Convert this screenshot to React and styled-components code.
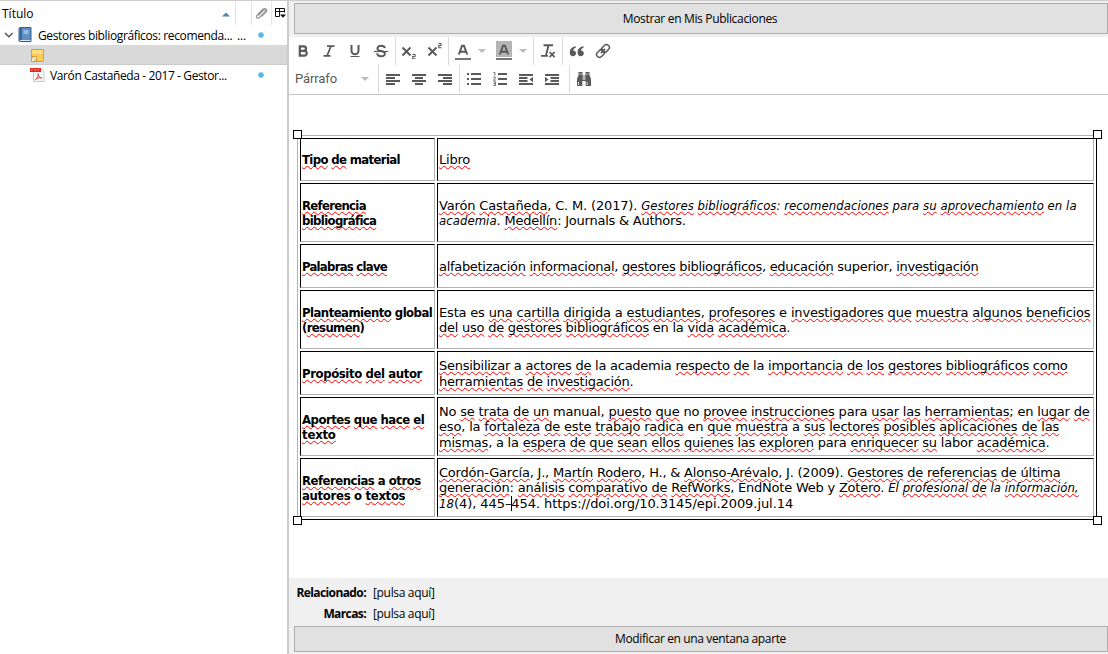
import React from 'react';
import styled, { createGlobalStyle, css } from 'styled-components';

const ink = '#595959';

const GlobalStyle = createGlobalStyle`
  *, *::before, *::after { box-sizing: border-box; }
  body { margin: 0; background: #fff; overflow: hidden; }
`;

const Window = styled.div`
  display: flex;
  width: 1108px;
  height: 654px;
  overflow: hidden;
  border-top: 1px solid #cdcdcd;
  background: #fff;
  color: #000;
  font: 12px/16px 'Open Sans', 'Noto Sans', sans-serif;
`;

const ItemsPane = styled.aside`
  width: 287px;
  flex: none;
`;

const TreeHeader = styled.div`
  display: flex;
  height: 24px;
`;

const HeaderCell = styled.div`
  display: flex;
  align-items: center;
  justify-content: ${(p) => (p.$spread ? 'space-between' : 'center')};
  width: ${(p) => p.$width}px;
  padding: ${(p) => (p.$spread ? '2px 5px 0 2px' : '0')};
  border-right: ${(p) => (p.$last ? 'none' : '1px solid #e5e5e5')};
`;

const TreeRow = styled.div`
  display: flex;
  align-items: center;
  height: 20px;
  padding-left: ${(p) => p.$indent}px;
  background: ${(p) => (p.$selected ? '#d9d9d9' : 'transparent')};
  border-bottom: 1px solid ${(p) => (p.$selected ? '#cbcbcb' : 'transparent')};
`;

const RowTitle = styled.span`
  width: ${(p) => p.$width}px;
  margin-left: ${(p) => p.$gap}px;
  padding-top: 2px;
  white-space: nowrap;
  letter-spacing: ${(p) => p.$track}px;
`;

const RowIcon = styled.span`
  display: flex;
  margin: 1px 0 0 ${(p) => p.$gap || 0}px;
`;

const Dot = styled.span`
  width: 6px;
  height: 6px;
  margin-left: ${(p) => p.$gap}px;
  border-radius: 50%;
  background: #45b8f0;
  border: 1px solid #8cc4e2;
`;

const Splitter = styled.div`
  width: 2px;
  flex: none;
  background: #cbcbcb;
`;

const NotePane = styled.main`
  display: flex;
  flex-direction: column;
  flex: 1;
  min-width: 0;
  background: #f0f0f0;
`;

const WideButton = styled.button`
  display: block;
  height: ${(p) => p.$height}px;
  margin: ${(p) => p.$margin};
  padding: ${(p) => p.$padding};
  border: 1px solid #adadad;
  background: #e1e1e1;
  color: #000;
  font: inherit;
  letter-spacing: ${(p) => p.$track}px;
`;

const Toolbar = styled.div`
  height: 58px;
  flex: none;
  background: #fff;
  border-bottom: 1px solid #c5c5c5;
`;

const ToolRow = styled.div`
  display: flex;
  height: 28px;
`;

const ToolGroup = styled.div`
  display: flex;
  align-items: center;
  width: ${(p) => p.$width}px;
  height: 28px;
  padding-left: ${(p) => p.$pad || 0}px;
  border-right: ${(p) => (p.$last ? 'none' : '1px solid #d9d9d9')};
`;

const Tool = styled.span`
  display: flex;
  align-items: center;
  justify-content: center;
  width: ${(p) => p.$width || 26}px;
  height: 28px;
  flex: none;
`;

const FormatLabel = styled.span`
  width: 66px;
  color: #595959;
  font: 13px/16px Roboto, 'Liberation Sans', sans-serif;
  letter-spacing: -0.1px;
`;

const Caret = styled.i`
  width: 0;
  height: 0;
  border: 4px solid transparent;
  border-top-color: #b5bcc2;
  border-bottom: none;
`;

const Editor = styled.div`
  height: 483px;
  flex: none;
  padding: 40px 0 0 8px;
  background: #fff;
`;

const NoteTable = styled.div`
  position: relative;
  display: grid;
  grid-template-columns: 135px 657px;
  grid-template-rows: 43px 59px 44px 59px 44px 59px 59px;
  gap: 2px;
  width: 800px;
  height: 385px;
  padding: 2px;
  border: 1px solid;
  border-color: #b2b2b2 #000 #000 #b2b2b2;
  font: 13px/15.4px 'DejaVu Sans', sans-serif;
`;

const condensed = css`
  font-family: 'DejaVu Sans Condensed', 'DejaVu Sans', sans-serif;
  font-stretch: condensed;
`;

const Cell = styled.div`
  display: flex;
  flex-direction: column;
  justify-content: center;
  padding: 1px 0 0 1px;
  border: 1px solid;
  border-color: #000 #b2b2b2 #b2b2b2 #000;
  ${(p) =>
    p.$label &&
    css`
      ${condensed}
      font-weight: bold;
    `}
`;

const Line = styled.div`
  white-space: pre;
  letter-spacing: ${(p) => p.$track || 0}px;
`;

const Word = styled.span`
  ${(p) =>
    p.$italic &&
    css`
      ${condensed}
      font-style: italic;
      letter-spacing: 0.05px;
    `}
  ${(p) =>
    p.$flagged &&
    css`
      text-decoration: underline wavy #f00 0.8px;
      text-decoration-skip-ink: none;
      text-underline-offset: 1px;
    `}
`;

const TextCursor = styled.span`
  display: inline-block;
  width: 1px;
  height: 15px;
  margin-right: -1px;
  vertical-align: -3px;
  background: #000;
`;

const Handle = styled.i`
  position: absolute;
  width: 9px;
  height: 9px;
  border: 1px solid #000;
  background: #fff;
  ${(p) => (p.$bottom ? 'bottom: -6px;' : 'top: -6px;')}
  ${(p) => (p.$right ? 'right: -6px;' : 'left: -5px;')}
`;

const Links = styled.dl`
  display: grid;
  grid-template-columns: 77px 1fr;
  grid-auto-rows: 21px;
  column-gap: 7px;
  margin: 0;
  padding-top: 4px;
  line-height: 21px;
`;

const LinkLabel = styled.dt`
  text-align: right;
  font-weight: bold;
  letter-spacing: -0.6px;
`;

const LinkValue = styled.dd`
  margin: 0;
  letter-spacing: -0.33px;
`;

/* "_" toggles the spelling mark, "*" toggles italics, "|" is the text cursor. */
function RichLine({ text, track }) {
  let italic = false;
  let flagged = false;
  const out = [];
  text.split(/([_*|])/).forEach((part, i) => {
    if (part === '_') flagged = !flagged;
    else if (part === '*') italic = !italic;
    else if (part === '|') out.push(<TextCursor key={i} />);
    else if (part) out.push(<Word key={i} $italic={italic} $flagged={flagged}>{part}</Word>);
  });
  return <Line $track={track}>{out}</Line>;
}

const rows = [
  { label: [['_Tipo_ _de_ material', -0.64]], body: [['_Libro_', -0.2]] },
  {
    label: [['_Referencia_', -0.7], ['_bibliográfica_', -0.65]],
    body: [
      ['_Varón_ _Castañeda_, C. M. (2017). *_Gestores_ _bibliográficos_: _recomendaciones_ para _su_ _aprovechamiento_ en la*', -0.16],
      ['*academia*. _Medellín_: Journals & Authors.', -0.23],
    ],
  },
  {
    label: [['_Palabras_ _clave_', -0.75]],
    body: [['_alfabetización_ _informacional_, _gestores_ _bibliográficos_, _educación_ superior, _investigación_', -0.3]],
  },
  {
    label: [['_Planteamiento_ global', -0.54], ['(_resumen_)', -0.65]],
    body: [
      ['Esta es _una_ _cartilla_ _dirigida_ a _estudiantes_, _profesores_ e _investigadores_ _que_ _muestra_ _algunos_ _beneficios_', -0.18],
      ['_del_ _uso_ _de_ _gestores_ _bibliográficos_ en la _vida_ _académica_.', -0.25],
    ],
  },
  {
    label: [['_Propósito_ _del_ _autor_', -0.4]],
    body: [
      ['_Sensibilizar_ a _actores_ _de_ la academia _respecto_ _de_ la _importancia_ _de_ _los_ _gestores_ _bibliográficos_ _como_', -0.26],
      ['_herramientas_ _de_ _investigación_.', -0.25],
    ],
  },
  {
    label: [['_Aportes_ _que_ _hace_ _el_', -0.5], ['_texto_', -0.2]],
    body: [
      ['No _se_ _trata_ _de_ _un_ manual, _puesto_ _que_ no _provee_ _instrucciones_ para _usar_ _las_ _herramientas_; en _lugar_ _de_', -0.19],
      ['_eso_, la _fortaleza_ _de_ _este_ _trabajo_ _radica_ en _que_ _muestra_ a _sus_ _lectores_ _posibles_ _aplicaciones_ _de_ _las_', -0.17],
      ['_mismas_, a la _espera_ _de_ _que_ _sean_ _ellos_ _quienes_ _las_ _exploren_ para _enriquecer_ _su_ labor _académica_.', -0.22],
    ],
  },
  {
    label: [['_Referencias_ a _otros_', -0.5], ['_autores_ o _textos_', -0.32]],
    body: [
      ['_Cordón-García_, J., _Martín_ _Rodero_, H., & _Alonso-Arévalo_, J. (2009). _Gestores_ _de_ _referencias_ _de_ _última_', -0.22],
      ['_generación_: _análisis_ _comparativo_ _de_ _RefWorks_, EndNote Web y _Zotero_. *El _profesional_ _de_ la _información,_*', -0.22],
      ['*18*(4), 445–|454. https://doi.org/10.3145/epi.2009.jul.14', -0.07],
    ],
  },
];

const Svg = ({ w = 16, h = 16, children }) => (
  <svg width={w} height={h} viewBox={`0 0 ${w} ${h}`} fill="none">{children}</svg>
);

const Bars = ({ bars }) => (
  <Svg>
    {bars.map(([x, y, w], i) => (
      <rect key={i} x={x} y={y} width={w} height="2" fill={ink} />
    ))}
  </Svg>
);

const Bold = () => (
  <Svg><path d="M4.800 2.200v11.600M4.800 3.300h4a2.200 2.200 0 0 1 0 4.500h-4M4.800 7.800h4.500a2.400 2.400 0 0 1 0 4.900H4.800" stroke={ink} strokeWidth="2.200" /></Svg>
);
const Italic = () => (
  <Svg><path d="M6 3.200h7.500M2.500 12.800h7M10 3 6 13" stroke={ink} strokeWidth="1.800" /></Svg>
);
const Underline = () => (
  <Svg><path d="M4.500 2v5.800a3.500 3.500 0 0 0 7 0V2" stroke={ink} strokeWidth="2" /><path d="M3.500 13.500h9" stroke={ink} /></Svg>
);
const Strike = () => (
  <Svg><path d="M11.900 5.200C11.600 3.300 10.300 2.700 8.100 2.700 6 2.700 4.400 3.700 4.400 5.400c0 3.600 7.500 1.500 7.500 5.100 0 1.800-1.600 2.800-3.800 2.800-2.300 0-3.800-.9-4.100-2.900" stroke={ink} strokeWidth="1.900" /><path d="M1 8.500h14" stroke={ink} strokeWidth="1.200" /></Svg>
);
const Script = ({ up }) => (
  <Svg>
    <path d="m1.500 4.500 8 8m0-8-8 8" stroke={ink} strokeWidth="1.900" />
    <path transform={up ? 'translate(0 -10)' : 'translate(0 1)'} d="M11.300 10.500h2.700v2h-2.300v2.200h2.900" stroke={ink} strokeWidth="1.100" />
  </Svg>
);
const LetterColor = ({ filled }) => (
  <Svg w={18} h={20}>
    {filled && <rect x="1" width="16" height="16" fill="#b5b5b5" />}
    <path d="M4.800 13.500 8 4.800h2l3.200 8.700M6 10.800h6" stroke={ink} strokeWidth="1.900" />
    <path d="M1 18h16" stroke="#777" strokeWidth="2" />
  </Svg>
);
const ClearFormat = () => (
  <Svg><path d="M3.500 2.300h9.500M8.500 2.500 6.100 12M1 12.900h7" stroke={ink} strokeWidth="1.900" /><path d="m9.600 9 5 5.200m0-5.200-5 5.200" stroke={ink} strokeWidth="1.700" /></Svg>
);
const Quote = () => (
  <Svg>
    {[0, 7.8].map((x) => (
      <path key={x} transform={`translate(${x} 0)`} d="M6.700 3.300C3.200 4 .8 6 .8 9.400c0 2.500 1.200 3.800 3.200 3.800 1.800 0 3-1.200 3-2.900S5.700 7.400 4.200 7.400c.1-1.400 1-2.200 2.500-2.700z" fill={ink} />
    ))}
  </Svg>
);
const Chain = () => (
  <Svg>
    <g transform="rotate(-45 8 8)" stroke={ink} strokeWidth="1.5">
      <rect x=".2" y="5.1" width="8.6" height="5.8" rx="2.9" />
      <rect x="7.2" y="5.1" width="8.6" height="5.8" rx="2.9" />
      <path d="M5 8h6" />
    </g>
  </Svg>
);
const BulletList = () => (
  <Svg>
    {[3, 8, 13].map((y) => (
      <path key={y} d={`M1 ${y}h2M5 ${y}h10`} stroke={ink} strokeWidth="2" />
    ))}
  </Svg>
);
const NumberList = () => (
  <Svg>
    <path d="M6 3h9M6 8h9M6 13h9" stroke={ink} strokeWidth="2" />
    <path d="M1.500 1.500h1.400v3.200M1.300 6.200h2v1.100L1.500 9.200h2.200M1.300 10.900h2.100v3.600H1.300m.4-1.800h1.600" stroke={ink} strokeWidth=".9" />
  </Svg>
);
const Dent = ({ inward }) => (
  <Svg>
    <path d="M1 4h14M1 13h14" stroke={ink} strokeWidth="2" />
    <path d={inward ? 'M6.500 7H15M6.500 10H15' : 'M1 7h8.500M1 10h8.500'} stroke={ink} strokeWidth="2" />
    <path d={inward ? 'M1 5.800 4.500 8.500 1 11.200z' : 'M15 5.800 11.500 8.500l3.500 2.700z'} fill={ink} />
  </Svg>
);
const Binoculars = () => (
  <Svg>
    <path d="M2.500 1h4v3h3V1h4v3L15 8v7H9.700V10H6.300v5H1V8l1.500-4z" fill={ink} />
    <path d="M7.200 4v5M8.800 4v5M2.500 11v3M11.200 11v3" stroke="#fff" strokeWidth=".8" />
    <path d="M3 3h3M10 3h3" stroke="#fff" strokeWidth=".6" />
  </Svg>
);

const BookIcon = () => (
  <Svg w={14} h={16}>
    <path d="M1 1.500C1 1 1.500.5 2 .5h11v14H2c-.6 0-1-.4-1-1z" fill="#5d8fc5" stroke="#335f91" />
    <path d="M3 1v12" stroke="#315d91" strokeWidth="1.500" />
    <path d="M2 13.500h10.500" stroke="#dce7f2" />
    <path d="M5.500 4h5M5.500 6h5" stroke="#d6e5f3" />
  </Svg>
);
const NoteIcon = () => (
  <Svg w={13} h={13}>
    <path d="M.5.500h12v12H.5z" fill="#fbcd58" stroke="#dda13b" />
    <path d="M1.500 1.500h10v3h-10z" fill="#fde38d" />
    <path d="M.5 7.500h5v5h-5z" fill="#fff4c9" stroke="#d99834" />
    <path d="m1 8 4 4" stroke="#e6a63c" />
  </Svg>
);
const PdfIcon = () => (
  <Svg w={15} h={16}>
    <path d="M3.500 1.500h7l3.500 3v10H3.500z" fill="#f8f8f8" stroke="#c9c9c9" />
    <path d="M0 1h11v4H0z" fill="#e2261b" />
    <path d="M1.500 4V2h1v1h-1M5 2v2h1V2zM8 4V2h1.500M8 3h1" stroke="#ffb5ad" strokeWidth=".4" />
    <path d="M5.500 12.500c2-1 3.200-4.200 2.700-5.800C7 7.500 10 11.400 12 11c-1.700-1-4.500-.2-6.500 1.500z" stroke="#dc4b40" />
  </Svg>
);
const ClipIcon = () => (
  <Svg w={13} h={13}>
    <path d="m3.200 8.500 5-5c1.700-1.500 3 .1 1.800 1.400L5 10c-2.600 2.500-5 .1-2.800-2.100l5.200-5.200C10.300-.1 13.200 2.700 10.800 5.200L6.500 9.600" stroke="#939393" strokeWidth="1.100" />
  </Svg>
);
const ColumnsIcon = () => (
  <Svg w={12} h={12}>
    <path d="M1.500 1.500h9v4M1.500 1v8.500h4M1 4.500h10M5.500 1.500v8" stroke="#111" />
    <path d="M6 7.500h6l-3 3.200z" fill="#111" />
  </Svg>
);

export default function App() {
  return (
    <Window>
      <GlobalStyle />
      <ItemsPane>
        <TreeHeader>
          <HeaderCell $width={236} $spread>
            Título
            <Svg w={8} h={5}><path d="M0 4.500 4 .5l4 4z" fill="#4a86ad" /></Svg>
          </HeaderCell>
          <HeaderCell $width={16} />
          <HeaderCell $width={20}><ClipIcon /></HeaderCell>
          <HeaderCell $width={15} $last><ColumnsIcon /></HeaderCell>
        </TreeHeader>
        <TreeRow $indent={4}>
          <Svg w={10} h={8}><path d="m1 2 3.800 3.800L8.600 2" stroke="#555" strokeWidth="1.500" /></Svg>
          <RowIcon $gap={4}><BookIcon /></RowIcon>
          <RowTitle $width={195} $gap={6} $track={-0.36}>Gestores bibliográficos: recomenda...</RowTitle>
          <RowTitle $width={12} $gap={4} $track={-0.2}>...</RowTitle>
          <Dot $gap={9} />
        </TreeRow>
        <TreeRow $indent={31} $selected><RowIcon><NoteIcon /></RowIcon></TreeRow>
        <TreeRow $indent={30}>
          <PdfIcon />
          <RowTitle $width={208} $gap={5} $track={-0.39}>Varón Castañeda - 2017 - Gestor...</RowTitle>
          <Dot $gap={0} />
        </TreeRow>
      </ItemsPane>
      <Splitter />
      <NotePane>
        <WideButton $height={31} $margin="2px 0 3px 5px" $padding="1px 2px 0 0" $track={-0.33}>Mostrar en Mis Publicaciones</WideButton>
        <Toolbar>
          <ToolRow>
            <ToolGroup $width={107} $pad={1}>
              <Tool><Bold /></Tool>
              <Tool><Italic /></Tool>
              <Tool><Underline /></Tool>
              <Tool><Strike /></Tool>
            </ToolGroup>
            <ToolGroup $width={53}>
              <Tool><Script /></Tool>
              <Tool><Script up /></Tool>
            </ToolGroup>
            <ToolGroup $width={85}>
              <Tool $width={28}><LetterColor /></Tool>
              <Tool $width={10}><Caret /></Tool>
              <Tool $width={34}><LetterColor filled /></Tool>
              <Tool $width={4}><Caret /></Tool>
            </ToolGroup>
            <ToolGroup $width={29} $pad={1}><Tool><ClearFormat /></Tool></ToolGroup>
            <ToolGroup $width={60} $pad={1} $last>
              <Tool><Quote /></Tool>
              <Tool><Chain /></Tool>
            </ToolGroup>
          </ToolRow>
          <ToolRow>
            <ToolGroup $width={90} $pad={6}>
              <FormatLabel>Párrafo</FormatLabel>
              <Caret />
            </ToolGroup>
            <ToolGroup $width={81} $pad={1}>
              <Tool><Bars bars={[[1, 3, 14], [1, 6, 9], [1, 9, 14], [1, 12, 9]]} /></Tool>
              <Tool><Bars bars={[[1, 3, 14], [4, 6, 8], [1, 9, 14], [4, 12, 8]]} /></Tool>
              <Tool><Bars bars={[[1, 3, 14], [6, 6, 9], [1, 9, 14], [6, 12, 9]]} /></Tool>
            </ToolGroup>
            <ToolGroup $width={110} $pad={1}>
              <Tool><BulletList /></Tool>
              <Tool><NumberList /></Tool>
              <Tool><Dent /></Tool>
              <Tool><Dent inward /></Tool>
            </ToolGroup>
            <ToolGroup $width={40} $pad={1} $last><Tool><Binoculars /></Tool></ToolGroup>
          </ToolRow>
        </Toolbar>
        <Editor>
          <NoteTable>
            {rows.map((row, i) => (
              <React.Fragment key={i}>
                <Cell $label>
                  {row.label.map(([text, track]) => <RichLine key={text} text={text} track={track} />)}
                </Cell>
                <Cell>
                  {row.body.map(([text, track]) => <RichLine key={text} text={text} track={track} />)}
                </Cell>
              </React.Fragment>
            ))}
            <Handle />
            <Handle $right />
            <Handle $bottom />
            <Handle $bottom $right />
          </NoteTable>
        </Editor>
        <Links>
          <LinkLabel>Relacionado:</LinkLabel>
          <LinkValue>[pulsa aquí]</LinkValue>
          <LinkLabel>Marcas:</LinkLabel>
          <LinkValue>[pulsa aquí]</LinkValue>
        </Links>
        <WideButton $height={26} $margin="2px 0 0 5px" $padding="0 1px 1px 0" $track={-0.37}>Modificar en una ventana aparte</WideButton>
      </NotePane>
    </Window>
  );
}
